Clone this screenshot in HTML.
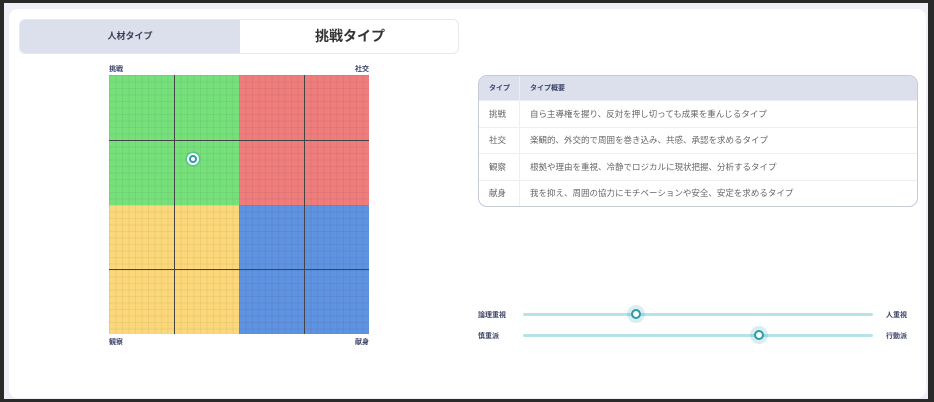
<!DOCTYPE html>
<html><head><meta charset="utf-8"><style>
*{margin:0;padding:0;box-sizing:border-box}
body{width:934px;height:402px;background:#2a2a2a;position:relative;overflow:hidden;font-family:"Liberation Sans","Noto Sans CJK JP",sans-serif;color:#333}
.bg{position:absolute;left:4px;top:3px;width:924px;height:396px;background:#eef0f5}
.card{position:absolute;left:9px;top:9px;width:917px;height:389px;background:#fff;border-radius:9px}
.tab{position:absolute;left:19px;top:19px;width:440px;height:35px;border:1px solid #e6e9f2;border-radius:6px;overflow:hidden;background:#fff}
.tab .l{position:absolute;left:0;top:0;width:220px;height:100%;background:#dce0ed;font-size:9px;font-weight:bold;color:#3a3f55;text-align:center;line-height:33px}
.tab .r{position:absolute;left:220px;top:0;width:220px;height:100%;font-size:14px;font-weight:bold;color:#333;text-align:center;line-height:33px}
.lbl{position:absolute;font-size:7px;font-weight:bold;color:#3a4266}
.grid{position:absolute;left:109px;top:75px;width:260px;height:259px}
.q{position:absolute;width:130px;height:129.5px;background-size:6.5px 6.5px}
table{position:absolute;left:478px;top:75px;width:440px;border:1px solid #c5cad8;border-radius:9px;border-collapse:separate;border-spacing:0;overflow:hidden;font-size:8.5px;color:#666}
th{background:#dce0ed;height:24px;text-align:left;font-size:7px;color:#3a4266;padding-left:10px}
td{height:26.5px;border-top:1px solid #eceef3;padding-left:10px}
td:first-child{width:41px;border-right:1px solid #eceef3}
th:first-child{border-right:1px solid #eceef3}
.sl{position:absolute;font-size:7px;font-weight:bold;color:#3a4266}
.track{position:absolute;left:523px;width:350px;height:3px;background:#b5e3e8;border-radius:2px}
.th{position:absolute;width:18px;height:18px;border-radius:50%;background:rgba(45,160,170,.18)}
.th i{position:absolute;left:4px;top:4px;width:10px;height:10px;border-radius:50%;background:#fff;border:2px solid #2a9ca6}
</style></head><body>
<div class="bg"></div><div class="card"></div>
<div class="tab"><div class="l">人材タイプ</div><div class="r">挑戦タイプ</div></div>
<div class="lbl" style="left:109px;top:64px">挑戦</div>
<div class="lbl" style="left:355px;top:64px">社交</div>
<div class="lbl" style="left:109px;top:337px">観察</div>
<div class="lbl" style="left:355px;top:337px">献身</div>
<div class="grid">
<div class="q" style="left:0;top:0;background-color:#76e07a;background-image:linear-gradient(rgba(0,0,0,.05) 1px,transparent 1px),linear-gradient(90deg,rgba(0,0,0,.05) 1px,transparent 1px)"></div>
<div class="q" style="left:130px;top:0;background-color:#ee7d7c;background-image:linear-gradient(rgba(0,0,0,.05) 1px,transparent 1px),linear-gradient(90deg,rgba(0,0,0,.05) 1px,transparent 1px)"></div>
<div class="q" style="left:0;top:129.5px;background-color:#fcd87a;background-image:linear-gradient(rgba(0,0,0,.05) 1px,transparent 1px),linear-gradient(90deg,rgba(0,0,0,.05) 1px,transparent 1px)"></div>
<div class="q" style="left:130px;top:129.5px;background-color:#5f92e0;background-image:linear-gradient(rgba(0,0,0,.05) 1px,transparent 1px),linear-gradient(90deg,rgba(0,0,0,.05) 1px,transparent 1px)"></div>
<div style="position:absolute;left:65px;top:0;width:1px;height:259px;background:#444"></div>
<div style="position:absolute;left:195px;top:0;width:1px;height:259px;background:#444"></div>
<div style="position:absolute;left:0;top:64.5px;width:260px;height:1px;background:#444"></div>
<div style="position:absolute;left:0;top:194px;width:260px;height:1px;background:#444"></div>
<div style="position:absolute;left:78px;top:78px;width:12px;height:12px;border-radius:50%;background:#2a9ca6;border:2px solid #fff;box-shadow:0 0 0 1.5px rgba(42,156,166,.4)"><div style="position:absolute;left:2px;top:2px;width:4px;height:4px;border-radius:50%;background:#fff"></div></div>
</div>
<table>
<tr><th>タイプ</th><th>タイプ概要</th></tr>
<tr><td>挑戦</td><td>自ら主導権を握り、反対を押し切っても成果を重んじるタイプ</td></tr>
<tr><td>社交</td><td>楽観的、外交的で周囲を巻き込み、共感、承認を求めるタイプ</td></tr>
<tr><td>観察</td><td>根拠や理由を重視、冷静でロジカルに現状把握、分析するタイプ</td></tr>
<tr><td>献身</td><td>我を抑え、周囲の協力にモチベーションや安全、安定を求めるタイプ</td></tr>
</table>
<div class="sl" style="left:478px;top:310px">論理重視</div>
<div class="sl" style="left:886px;top:310px">人重視</div>
<div class="sl" style="left:478px;top:331px">慎重派</div>
<div class="sl" style="left:886px;top:331px">行動派</div>
<div class="track" style="top:313px"></div>
<div class="track" style="top:334px"></div>
<div class="th" style="left:627px;top:305px"><i></i></div>
<div class="th" style="left:750px;top:326px"><i></i></div>
</body></html>
